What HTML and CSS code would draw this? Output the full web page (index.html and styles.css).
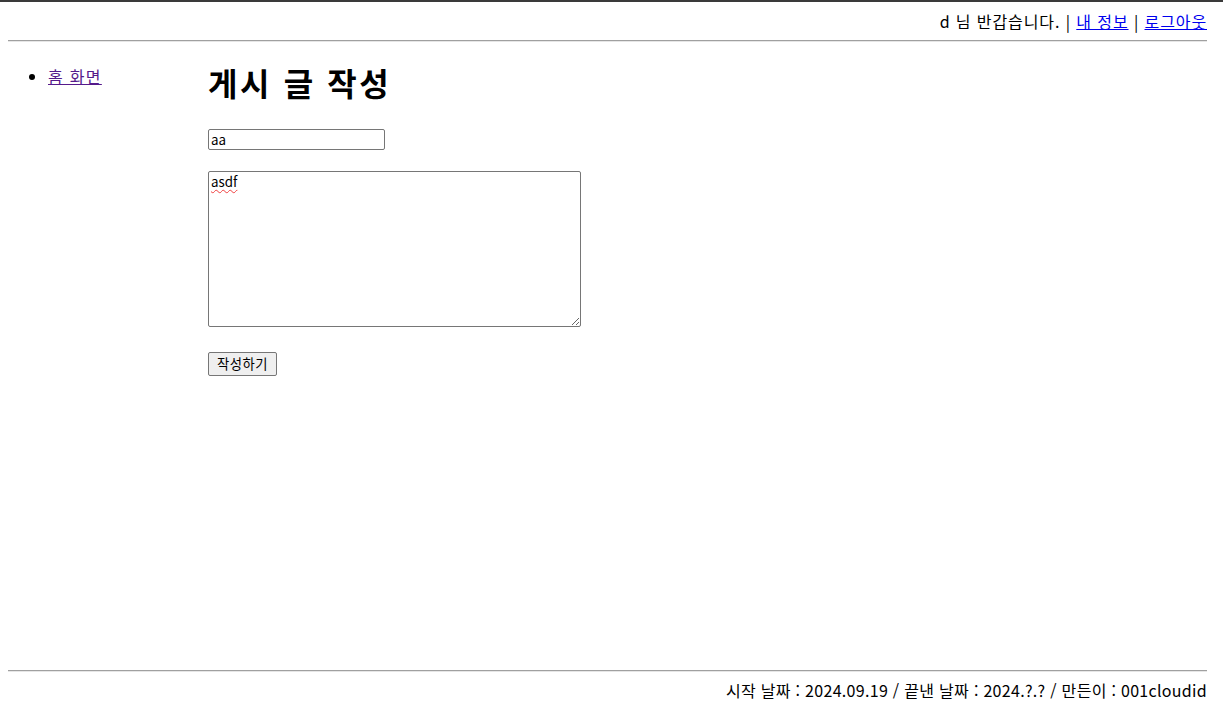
FILE: index.html
```html
<!DOCTYPE html>
<html lang="ko">
<head>
  <meta charset="UTF-8">
  <title>게시 글 작성</title>
  <link rel="stylesheet" href="styles.css">
</head>
<body>
<div class="page">
  <header class="top">
    d 님 반갑습니다. | <a href="#">내 정보</a> | <a href="#">로그아웃</a>
  </header>
  <hr>

  <div class="content">
    <nav class="side">
      <ul>
        <li><a href="#" class="visited">홈 화면</a></li>
      </ul>
    </nav>

    <main class="main">
      <h1>게시 글 작성</h1>
      <form class="write-form">
        <input type="text" class="title-input" value="aa">
        <textarea class="body-input" spellcheck="false">asdf</textarea>
        <button type="button" class="submit">작성하기</button>
      </form>
    </main>
  </div>

  <footer class="bottom">
    <hr>
    <div class="info">시작 날짜 : 2024.09.19 / 끝낸 날짜 : 2024.?.? / 만든이 : 001cloudid</div>
  </footer>
</div>
</body>
</html>
```

FILE: styles.css
```css
html {
  border-top: 2px solid #3a3a3a;
}
body {
  margin: 0 16px 0 8px;
  font-family: "Noto Sans CJK KR", "Noto Sans", sans-serif;
  font-size: 16px;
  line-height: 1.35;
  color: #000;
}
.page {
  display: flex;
  flex-direction: column;
  height: 706px;
}
a {
  color: #0000ee;
}
a.visited {
  color: #551a8b;
}
hr {
  margin: 8px 0 0;
  border: 0;
  border-top: 1px solid #a0a0a0;
  border-bottom: 1px solid #e6e6e6;
}
.top {
  text-align: right;
  padding-top: 9px;
  letter-spacing: 0.9px;
  margin-bottom: -1px;
}
.content {
  display: flex;
  flex: 1;
}
.side {
  width: 200px;
}
.side ul {
  margin: 24px 0 0;
  padding-left: 40px;
  letter-spacing: 1.3px;
}
.main h1 {
  font-size: 32px;
  font-weight: bold;
  line-height: 1.35;
  letter-spacing: 2.6px;
  margin: 19px 0 25px;
}
.write-form {
  display: flex;
  flex-direction: column;
  align-items: flex-start;
}
.title-input {
  width: 177px;
  height: 21px;
  box-sizing: border-box;
  font-family: "Noto Sans CJK KR", sans-serif;
  font-size: 13.33px;
  padding: 0 2px;
  border: 1px solid #767676;
  border-radius: 2px;
  margin: 0 0 21px;
}
.body-input {
  width: 373px;
  height: 156px;
  box-sizing: border-box;
  font-family: "Noto Sans CJK KR", sans-serif;
  font-size: 13.33px;
  line-height: 1.2;
  padding: 2px;
  border: 1px solid #767676;
  border-radius: 2px;
  margin: 0 0 25px;
  resize: both;
  text-decoration: underline wavy #f04040;
  text-decoration-thickness: 1px;
  text-underline-offset: 2px;
}
.submit {
  width: 69px;
  height: 24px;
  font-family: "Noto Sans CJK KR", sans-serif;
  font-size: 13.33px;
  letter-spacing: 0.5px;
  padding: 0;
  background: #efefef;
  border: 1px solid #767676;
  border-radius: 2px;
}
.bottom hr {
  margin-top: 0;
}
.info {
  text-align: right;
  letter-spacing: 0.3px;
  padding: 8px 0 6px;
}
```
